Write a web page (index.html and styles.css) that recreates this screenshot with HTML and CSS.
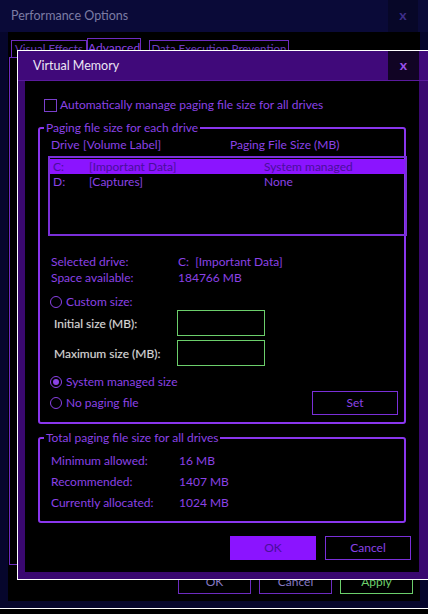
FILE: index.html
```html
<!DOCTYPE html>
<html>
<head>
<meta charset="utf-8">
<title>Virtual Memory</title>
<link rel="stylesheet" href="styles.css">
</head>
<body>
<div class="perf">
  <div class="perf-title">
    <span class="perf-title-text">Performance Options</span>
    <span class="perf-close">x</span>
  </div>
  <div class="perf-body">
    <div class="tabs">
      <div class="tab tab-visual">Visual Effects</div>
      <div class="tab tab-active">Advanced</div>
      <div class="tab tab-dep">Data Execution Prevention</div>
    </div>
    <div class="tab-panel"></div>
    <div class="perf-buttons">
      <div class="pbtn">OK</div>
      <div class="pbtn">Cancel</div>
      <div class="pbtn pbtn-apply">Apply</div>
    </div>
  </div>
</div>
<div class="perf-edge"></div>

<div class="vm">
  <div class="vm-title">
    <span class="vm-title-text">Virtual Memory</span>
    <span class="vm-close">x</span>
  </div>
  <div class="vm-frame">
    <div class="vm-content">
      <div class="check-row">
        <span class="checkbox"></span>
        <span class="check-label">Automatically manage paging file size for all drives</span>
      </div>

      <fieldset class="group group-drives">
        <legend class="group-legend">Paging file size for each drive</legend>
        <div class="list-head">
          <div class="list-head-drive"><span class="head-drive">Drive</span>[Volume Label]</div>
          <div>Paging File Size (MB)</div>
        </div>
        <div class="listbox">
          <div class="list-row list-row-selected">
            <span class="col-drive">C:</span><span class="col-label">[Important Data]</span><span>System managed</span>
          </div>
          <div class="list-row">
            <span class="col-drive">D:</span><span class="col-label">[Captures]</span><span>None</span>
          </div>
        </div>

        <div class="info-grid">
          <span>Selected drive:</span><span>C:&nbsp; [Important Data]</span>
          <span>Space available:</span><span>184766 MB</span>
        </div>

        <div class="radio-row radio-custom">
          <span class="radio"></span><span>Custom size:</span>
        </div>
        <div class="size-row">
          <span class="size-label">Initial size (MB):</span>
          <span class="size-input"></span>
        </div>
        <div class="size-row size-row-second">
          <span class="size-label">Maximum size (MB):</span>
          <span class="size-input"></span>
        </div>
        <div class="radio-row radio-system">
          <span class="radio radio-on"></span><span>System managed size</span>
        </div>
        <div class="last-row">
          <div class="radio-row">
            <span class="radio"></span><span>No paging file</span>
          </div>
          <div class="btn btn-set">Set</div>
        </div>
      </fieldset>

      <fieldset class="group group-total">
        <legend class="group-legend">Total paging file size for all drives</legend>
        <div class="total-grid">
          <span>Minimum allowed:</span><span>16 MB</span>
          <span>Recommended:</span><span>1407 MB</span>
          <span>Currently allocated:</span><span>1024 MB</span>
        </div>
      </fieldset>

      <div class="vm-buttons">
        <div class="btn btn-ok">OK</div>
        <div class="btn">Cancel</div>
      </div>
    </div>
  </div>
</div>
</body>
</html>
```

FILE: styles.css
```css
* { box-sizing: border-box; }

html, body {
  margin: 0;
  padding: 0;
  background: #000;
  width: 428px;
  height: 614px;
  overflow: hidden;
  font-family: Lato, "Liberation Sans", sans-serif;
  font-size: 12px;
  color: #8b42e6;
}

/* ---------- background window: Performance Options ---------- */
.perf {
  width: 428px;
  height: 608px;
  background: #06062c;
  display: flex;
  flex-direction: column;
}

.perf-title {
  height: 32px;
  flex: none;
  display: flex;
  align-items: stretch;
  background: #0a0a38;
}

.perf-title-text {
  flex: 1;
  padding-left: 11px;
  line-height: 32px;
  color: #7c7ca4;
  font-size: 12.5px;
}

.perf-close {
  width: 30px;
  margin-right: 10px;
  background: #070728;
  color: #3e2e8a;
  font-weight: bold;
  font-size: 14px;
  text-align: center;
  line-height: 30px;
}

.perf-body {
  flex: 1;
  margin: 0 8px 7px 8px;
  background: #000;
  display: flex;
  flex-direction: column;
}

.tabs {
  margin-top: 6px;
  padding-left: 3px;
  height: 19px;
  display: flex;
  align-items: flex-end;
}

.tab {
  height: 17px;
  border: 1px solid #6d2cc0;
  border-bottom: 0;
  color: #6d3cc0;
  line-height: 16px;
  font-size: 11.5px;
  text-align: center;
  white-space: nowrap;
  overflow: hidden;
}

.tab-visual { width: 76px; }

.tab-active {
  width: 54px;
  height: 19px;
  line-height: 17px;
  font-size: 12px;
  color: #8b42e6;
}

.tab-dep {
  width: 140px;
  margin-left: 8px;
}

.tab-panel {
  margin-left: 1px;
  height: 508px;
  border: 1px solid #6d2cc0;
}

.perf-buttons {
  display: flex;
  justify-content: flex-end;
  gap: 8px;
  margin-top: 6px;
  padding-right: 7px;
}

.pbtn {
  width: 73px;
  height: 23px;
  border: 1px solid #6d2cc0;
  color: #8478c0;
  text-align: center;
  line-height: 20px;
}

.pbtn-apply {
  border-color: #6ccf6c;
  color: #6ccf6c;
}

.perf-edge {
  height: 1px;
  background: #fff;
}

/* ---------- Virtual Memory dialog (window over the other) ---------- */
.vm {
  position: absolute;
  left: 17px;
  top: 50px;
  width: 411px;
  height: 530px;
  border: 1px solid #fff;
  border-right: 0;
  display: flex;
  flex-direction: column;
}

.vm-title {
  height: 30px;
  flex: none;
  background: #40097a;
  border-bottom: 1px solid #5a1a9c;
  display: flex;
  align-items: stretch;
}

.vm-title-text {
  flex: 1;
  padding-left: 15px;
  line-height: 29px;
  color: #ece6f4;
  font-size: 12.5px;
}

.vm-close {
  width: 31px;
  margin-right: 9px;
  background: #110424;
  color: #9a50ec;
  font-weight: bold;
  font-size: 14px;
  text-align: center;
  line-height: 28px;
}

.vm-frame {
  flex: 1;
  background: #3a0870;
  padding: 0 9px 7px 7px;
  display: flex;
}

.vm-content {
  flex: 1;
  background: #000;
  padding-top: 16px;
}

.check-row {
  display: flex;
  align-items: center;
  height: 16px;
  padding-left: 19px;
}

.checkbox {
  width: 13px;
  height: 13px;
  border: 1px solid #7a3fcc;
  margin-right: 3px;
}

.check-label { line-height: 16px; }

/* group boxes */
.group {
  margin: 7px 0 0 13px;
  padding: 0;
  width: 368px;
  min-width: 0;
  border: 2px solid #8a36ee;
  border-radius: 3px;
}

.group-legend {
  margin-left: 4px;
  padding: 0 2px;
  line-height: 16px;
  height: 16px;
}

.list-head {
  margin-top: 1px;
  padding-left: 11px;
  line-height: 16px;
  display: grid;
  grid-template-columns: 179px auto;
}

.head-drive {
  display: inline-block;
  width: 32px;
}

.listbox {
  margin: 3px 0 0 8px;
  width: 359px;
  height: 80px;
  border: 2px solid #7a2fd8;
  padding-top: 1px;
}

.list-row {
  height: 15px;
  line-height: 15px;
  padding-left: 3px;
  display: flex;
}

.list-row-selected {
  background: #8b14ff;
  color: #4a0e9c;
}

.col-drive { width: 36px; }
.col-label { width: 175px; }

.info-grid {
  margin-top: 18px;
  padding-left: 11px;
  display: grid;
  grid-template-columns: 127px auto;
  line-height: 16px;
}

.radio-row {
  display: flex;
  align-items: center;
  height: 16px;
  line-height: 16px;
  padding-left: 10px;
}

.radio {
  width: 12px;
  height: 12px;
  border: 1px solid #8b42e6;
  border-radius: 50%;
  margin-right: 4px;
  display: flex;
  align-items: center;
  justify-content: center;
}

.radio-on::after {
  content: "";
  width: 6px;
  height: 6px;
  border-radius: 50%;
  background: #8b42e6;
}

.radio-custom { margin-top: 8px; }

.size-row {
  display: flex;
  align-items: center;
  height: 26px;
  padding-left: 14px;
}

.size-row-second { margin-top: 4px; }

.size-label {
  width: 123px;
  color: #d6d6d6;
  text-shadow: 0 0 1px #555;
}

.size-input {
  width: 88px;
  height: 26px;
  border: 1px solid #6ccf6c;
}

.radio-system { margin-top: 8px; }

.last-row {
  margin-top: 1px;
  height: 24px;
  display: flex;
  align-items: center;
  justify-content: space-between;
  padding-right: 6px;
  margin-bottom: 7px;
}

.btn {
  width: 86px;
  height: 24px;
  border: 1px solid #7a2fd8;
  color: #8b42e6;
  text-align: center;
  line-height: 21px;
}

.group-total { margin-top: 6px; }

.total-grid {
  margin-top: 4px;
  margin-bottom: 8px;
  padding-left: 11px;
  display: grid;
  grid-template-columns: 128px auto;
  line-height: 21px;
}

.vm-buttons {
  margin-top: 13px;
  padding-right: 8px;
  display: flex;
  justify-content: flex-end;
  gap: 9px;
}

.btn-ok {
  background: #8b14ff;
  border-color: #8b14ff;
  color: #4a0e9c;
}
```
